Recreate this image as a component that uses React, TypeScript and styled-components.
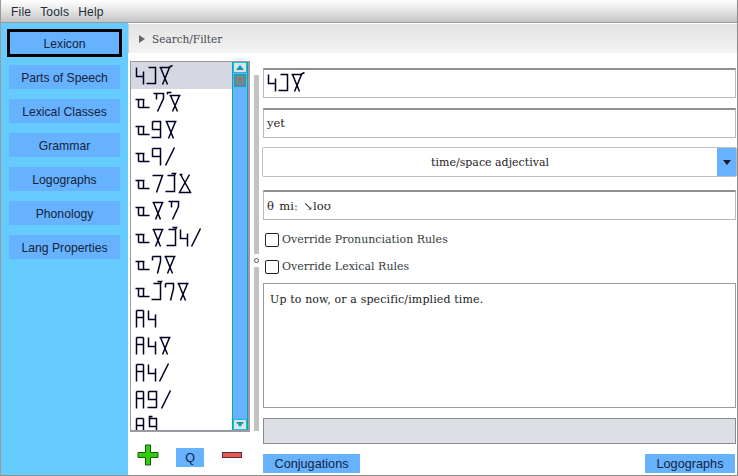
import React from 'react';
import styled, { createGlobalStyle } from 'styled-components';

const GlobalStyle = createGlobalStyle`
  html, body {
    margin: 0;
    padding: 0;
    background: #ffffff;
  }
`;

const SANS = `"Liberation Sans", Arial, sans-serif`;
const SERIF = `"DejaVu Serif", "Liberation Serif", serif`;
const TEXT = '#15233a';

const Window = styled.div`
  box-sizing: border-box;
  width: 738px;
  height: 476px;
  display: flex;
  flex-direction: column;
  overflow: hidden;
  border-right: 1px solid #8c8c8c;
  border-bottom: 1px solid #8c8c8c;
  border-left: 1px solid #9a9a9a;
`;

const MenuBar = styled.div`
  flex: 0 0 23px;
  box-sizing: border-box;
  display: flex;
  align-items: center;
  gap: 9px;
  padding: 2px 0 0 10px;
  background: linear-gradient(#ffffff, #f0f0f0 30%, #c4c4c4);
  border-bottom: 1px solid #9a9a9a;
`;

const MenuItem = styled.span`
  font: 12px ${SANS};
  letter-spacing: 0.2px;
  color: #222c3c;
`;

const Body = styled.div`
  flex: 1;
  display: flex;
  min-height: 0;
`;

const Sidebar = styled.div`
  flex: 0 0 127px;
  box-sizing: border-box;
  display: flex;
  flex-direction: column;
  align-items: center;
  padding-top: 6px;
  background: #66ccff;
`;

const NavButton = styled.div<{ $active?: boolean }>`
  box-sizing: border-box;
  display: flex;
  align-items: center;
  justify-content: center;
  width: ${p => (p.$active ? '115px' : '111px')};
  height: ${p => (p.$active ? '28px' : '24px')};
  margin-bottom: ${p => (p.$active ? '8px' : '10px')};
  padding-top: 1px;
  background: #66b2ff;
  border: ${p => (p.$active ? '3px solid #000000' : 'none')};
  font: 12.2px ${SANS};
  color: ${TEXT};
`;

const Main = styled.div`
  flex: 1;
  display: flex;
  flex-direction: column;
  min-width: 0;
`;

const FilterBar = styled.div`
  flex: 0 0 29px;
  box-sizing: border-box;
  display: flex;
  align-items: center;
  gap: 7px;
  padding-left: 10px;
  background: linear-gradient(#e2e2e2, #f4f4f4);
  border-left: 1px solid #cccccc;
  margin-top: 1px;
`;

const Caret = styled.span`
  width: 0;
  height: 0;
  border-left: 6px solid #666666;
  border-top: 4px solid transparent;
  border-bottom: 4px solid transparent;
`;

const FilterLabel = styled.span`
  font: 10.5px ${SERIF};
  color: #444a50;
`;

const Panes = styled.div`
  flex: 1;
  display: flex;
  min-height: 0;
`;

const ListPane = styled.div`
  flex: 0 0 122px;
  box-sizing: border-box;
  display: flex;
  flex-direction: column;
  padding: 8px 0 0 2px;
`;

const ListBox = styled.div`
  box-sizing: border-box;
  width: 120px;
  height: 371px;
  display: flex;
  border: 1px solid #9a9aa4;
  border-width: 1px 2px 2px 1px;
  overflow: hidden;
`;

const Rows = styled.div`
  flex: 1;
  min-width: 0;
  overflow: hidden;
`;

const Row = styled.div<{ $selected?: boolean }>`
  height: 27px;
  display: flex;
  align-items: center;
  gap: 2px;
  padding-left: 4px;
  background: ${p => (p.$selected ? '#d5d8e0' : '#ffffff')};
`;

const Scrollbar = styled.div`
  flex: 0 0 16px;
  box-sizing: border-box;
  display: flex;
  flex-direction: column;
  gap: 1px;
  background: #66b2ff;
  border: 1px solid #0fa3b8;
  border-width: 0 1px;
`;

const ScrollEnd = styled.div`
  flex: 0 0 11px;
  box-sizing: border-box;
  display: flex;
  align-items: center;
  justify-content: center;
  background: #dde2e6;
  border: 1px solid #12c0d8;
`;

const ScrollTrack = styled.div`
  flex: 1;
  padding: 0 1px;
`;

const ScrollThumb = styled.div`
  box-sizing: border-box;
  height: 13px;
  background: repeating-linear-gradient(#808080 0 2px, #5f8fa8 2px 3px);
  border: 1px solid #0fa3b8;
`;

const Arrow = styled.span<{ $down?: boolean }>`
  width: 0;
  height: 0;
  border-left: 4px solid transparent;
  border-right: 4px solid transparent;
  ${p => (p.$down ? 'border-top: 5px solid #0f9ab0;' : 'border-bottom: 5px solid #0f9ab0;')}
`;

const ListActions = styled.div`
  display: flex;
  align-items: flex-start;
  margin-top: 12px;
  padding-left: 7px;
`;

const QButton = styled.div`
  width: 28px;
  height: 19px;
  margin: 4px 18px 0 17px;
  display: flex;
  align-items: center;
  justify-content: center;
  background: #66b2ff;
  font: 12.5px ${SANS};
  color: ${TEXT};
`;

const MinusHolder = styled.div`
  margin-top: 8px;
  line-height: 0;
`;

const Splitter = styled.div`
  flex: 0 0 12px;
  box-sizing: border-box;
  height: 378px;
  display: flex;
  flex-direction: column;
  align-items: center;
  padding-top: 22px;
`;

const SplitBar = styled.div<{ $grow: number }>`
  flex: ${p => p.$grow};
  width: 5px;
  background: #c2c2c2;
`;

const SplitDot = styled.div`
  width: 5px;
  height: 5px;
  margin: 4px 0;
  box-sizing: border-box;
  border: 1px solid #555555;
  border-radius: 50%;
`;

const Form = styled.div`
  flex: 1;
  display: flex;
  flex-direction: column;
  padding: 15px 1px 0 1px;
  min-width: 0;
`;

const Field = styled.div`
  box-sizing: border-box;
  height: 30px;
  margin-bottom: 10px;
  display: flex;
  align-items: center;
  gap: 2px;
  padding: 0 0 2px 3px;
  background: #ffffff;
  border: 1px solid #b8b8b8;
  border-top: 2px solid #8e8e8e;
`;

const LowField = styled(Field)`
  margin-top: 13px;
  margin-bottom: 6px;
  padding-bottom: 0;
`;

const SerifText = styled.span`
  font: 11.5px ${SERIF};
  color: #222222;
`;

const IpaText = styled(SerifText)`
  word-spacing: 1.5px;
  letter-spacing: 0.1px;
`;

const Select = styled.div`
  box-sizing: border-box;
  height: 30px;
  margin: -1px -1px 0 -1px;
  display: flex;
  background: #ffffff;
  border: 1px solid #bcbcbc;
  border-radius: 2px;
`;

const SelectValue = styled.div`
  flex: 1;
  display: flex;
  align-items: center;
  justify-content: center;
  font: 11px ${SERIF};
  color: #222222;
`;

const SelectButton = styled.div`
  flex: 0 0 19px;
  display: flex;
  align-items: center;
  justify-content: center;
  background: #66b2ff;
`;

const SelectArrow = styled.span`
  width: 0;
  height: 0;
  border-left: 4px solid transparent;
  border-right: 4px solid transparent;
  border-top: 5px solid #1a1a2a;
`;

const CheckRow = styled.label`
  height: 27px;
  display: flex;
  align-items: center;
  gap: 3px;
  padding-left: 2px;
  font: 11px ${SERIF};
  color: #333a40;
`;

const CheckBox = styled.span`
  box-sizing: border-box;
  width: 14px;
  height: 14px;
  background: #ffffff;
  border: 1px solid #222222;
  border-radius: 2px;
`;

const TextArea = styled.div`
  box-sizing: border-box;
  height: 125px;
  margin-top: 3px;
  padding: 9px 6px;
  background: #ffffff;
  border: 1px solid #9a9aa0;
  font: 11px ${SERIF};
  letter-spacing: 0.13px;
  color: #222222;
`;

const InfoBox = styled.div`
  box-sizing: border-box;
  height: 26px;
  margin-top: 10px;
  background: #dcdfe4;
  border: 1px solid #8a8a92;
`;

const Footer = styled.div`
  display: flex;
  justify-content: space-between;
  margin-top: 10px;
  padding-right: 1px;
`;

const FooterButton = styled.div<{ $width: number }>`
  width: ${p => p.$width}px;
  height: 19px;
  display: flex;
  align-items: center;
  justify-content: center;
  background: #66b2ff;
  font: 12.7px ${SANS};
  color: ${TEXT};
`;

const GlyphSvg = styled.svg`
  flex: none;
  fill: none;
  stroke: #000020;
  stroke-width: 1.5;
  overflow: visible;
`;

// the script has no installed font, so each sign is drawn as strokes
const GLYPHS: Record<string, { w: number; d: string }> = {
  hook: { w: 9, d: 'M1 2V11H8M8 6V19' },
  bracket: { w: 11, d: 'M2 2H9V18H0' },
  tickBracket: { w: 11, d: 'M2 2H9V18H0M9 2L10 0H6' },
  hourTick: { w: 14, d: 'M0 2H11M1 2L8 19M10 2L3 19M9 2L13 0' },
  hourCorner: { w: 15, d: 'M1 2V0H5M3 3H14M4 3L11 19M13 3L6 19' },
  hour: { w: 13, d: 'M1 2H12M2 2L9 19M11 2L4 19' },
  base: { w: 14, d: 'M0 7H9M3 7V15M8 7V15M3 15H14' },
  sevenTick: { w: 13, d: 'M2 1H12V6L6 19M5 1V7' },
  seven: { w: 12, d: 'M1 2H11L5 19' },
  sevenShort: { w: 10, d: 'M1 2H9V7L6 19M1 2V6' },
  nine: { w: 11, d: 'M1 2H9V18H0M1 2V10H9' },
  nineOpen: { w: 11, d: 'M1 2H9V19M1 2V10H9' },
  nineTick: { w: 11, d: 'M1 2H9V19M2 2V0H5M2 2V10H9' },
  slash: { w: 11, d: 'M10 1L1 19' },
  delta: { w: 13, d: 'M2 1L12 19H1L11 1M1 1H4' },
  pi: { w: 10, d: 'M1 2H8M1 2V19M8 2V19M1 9H8' },
};

const Sign: React.FC<{ name: string }> = ({ name }) => {
  const g = GLYPHS[name];
  return (
    <GlyphSvg width={g.w} height={21} viewBox={`0 0 ${g.w} 21`} aria-hidden>
      <path d={g.d} transform="translate(0.5 0.5)" />
    </GlyphSvg>
  );
};

const words: string[][] = [
  ['hook', 'bracket', 'hourTick'],
  ['base', 'sevenTick', 'hourCorner'],
  ['base', 'nine', 'hour'],
  ['base', 'nineOpen', 'slash'],
  ['base', 'seven', 'tickBracket', 'delta'],
  ['base', 'hour', 'sevenTick'],
  ['base', 'hour', 'tickBracket', 'hook', 'slash'],
  ['base', 'sevenShort', 'hour'],
  ['base', 'tickBracket', 'sevenShort', 'hour'],
  ['pi', 'hook'],
  ['pi', 'hook', 'hour'],
  ['pi', 'hook', 'slash'],
  ['pi', 'nine', 'slash'],
  ['pi', 'nineTick'],
];

const navItems = ['Parts of Speech', 'Lexical Classes', 'Grammar', 'Logographs', 'Phonology', 'Lang Properties'];

const PlusIcon = () => (
  <svg width="22" height="22" viewBox="0 0 22 22">
    <path d="M8.5 1H13.5V8.5H21V13.5H13.5V21H8.5V13.5H1V8.5H8.5Z" fill="#33cc11" stroke="#145a0a" strokeWidth="1" />
  </svg>
);

const MinusIcon = () => (
  <svg width="20" height="6" viewBox="0 0 20 6">
    <rect x="0.5" y="0.5" width="19" height="5" fill="#ee5555" stroke="#553333" strokeWidth="1" />
  </svg>
);

const App: React.FC = () => (
  <Window>
    <GlobalStyle />
    <MenuBar>
      <MenuItem>File</MenuItem>
      <MenuItem>Tools</MenuItem>
      <MenuItem>Help</MenuItem>
    </MenuBar>
    <Body>
      <Sidebar>
        <NavButton $active>Lexicon</NavButton>
        {navItems.map(item => (
          <NavButton key={item}>{item}</NavButton>
        ))}
      </Sidebar>
      <Main>
        <FilterBar>
          <Caret />
          <FilterLabel>Search/Filter</FilterLabel>
        </FilterBar>
        <Panes>
          <ListPane>
            <ListBox>
              <Rows>
                {words.map((word, i) => (
                  <Row key={i} $selected={i === 0}>
                    {word.map((name, j) => (
                      <Sign key={j} name={name} />
                    ))}
                  </Row>
                ))}
              </Rows>
              <Scrollbar>
                <ScrollEnd>
                  <Arrow />
                </ScrollEnd>
                <ScrollTrack>
                  <ScrollThumb />
                </ScrollTrack>
                <ScrollEnd>
                  <Arrow $down />
                </ScrollEnd>
              </Scrollbar>
            </ListBox>
            <ListActions>
              <PlusIcon />
              <QButton>Q</QButton>
              <MinusHolder>
                <MinusIcon />
              </MinusHolder>
            </ListActions>
          </ListPane>
          <Splitter>
            <SplitBar $grow={177} />
            <SplitDot />
            <SplitBar $grow={163} />
          </Splitter>
          <Form>
            <Field>
              {words[0].map((name, j) => (
                <Sign key={j} name={name} />
              ))}
            </Field>
            <Field>
              <SerifText>yet</SerifText>
            </Field>
            <Select>
              <SelectValue>time/space adjectival</SelectValue>
              <SelectButton>
                <SelectArrow />
              </SelectButton>
            </Select>
            <LowField>
              <IpaText>θ miː ↘loʊ</IpaText>
            </LowField>
            <CheckRow>
              <CheckBox />
              Override Pronunciation Rules
            </CheckRow>
            <CheckRow>
              <CheckBox />
              Override Lexical Rules
            </CheckRow>
            <TextArea>Up to now, or a specific/implied time.</TextArea>
            <InfoBox />
            <Footer>
              <FooterButton $width={97}>Conjugations</FooterButton>
              <FooterButton $width={90}>Logographs</FooterButton>
            </Footer>
          </Form>
        </Panes>
      </Main>
    </Body>
  </Window>
);

export default App;
